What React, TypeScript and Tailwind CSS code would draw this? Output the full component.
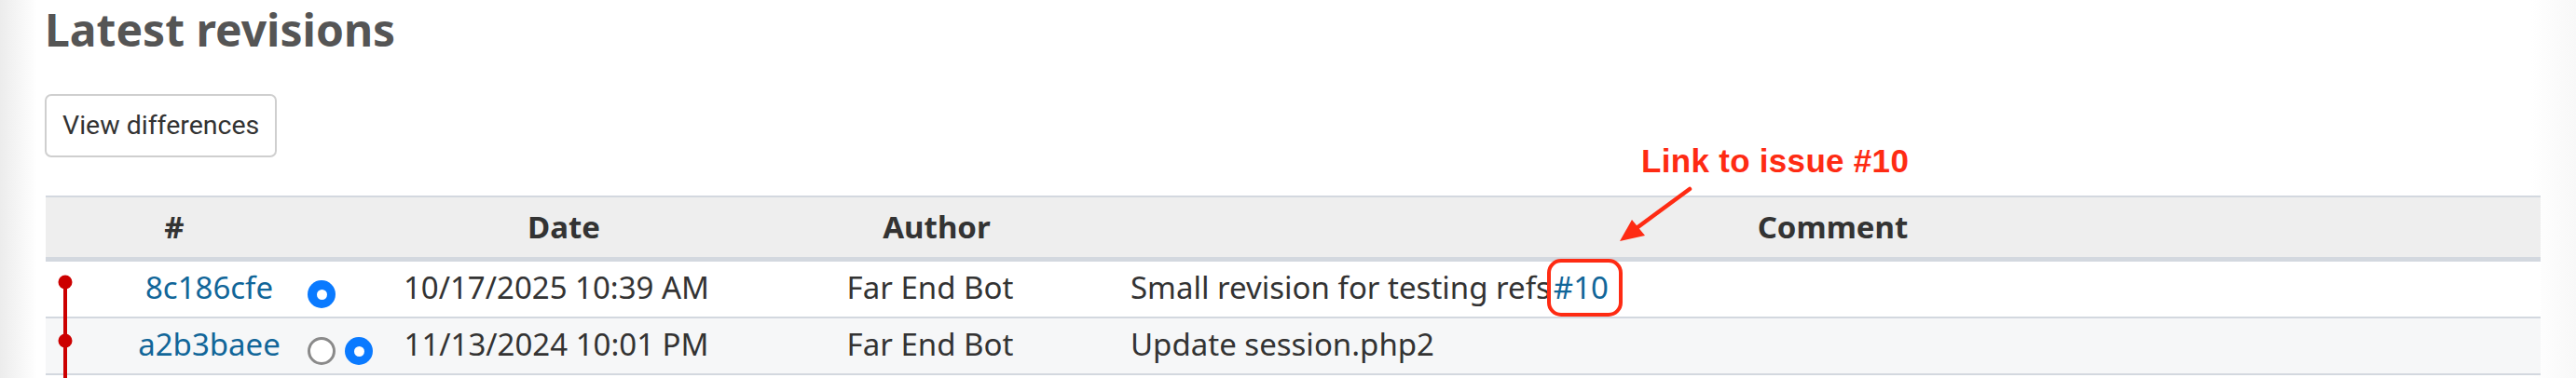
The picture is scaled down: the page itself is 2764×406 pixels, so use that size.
import type { ReactNode } from 'react'

type Revision = {
  id: string
  date: string
  author: string
  comment: ReactNode
  fromChecked: boolean
  showFrom: boolean
  showTo: boolean
}

const revisions: Revision[] = [
  {
    id: '8c186cfe',
    date: '10/17/2025 10:39 AM',
    author: 'Far End Bot',
    comment: (
      <>
        Small revision for testing refs<a className="ml-[3px] text-[#116699]">#10</a>
      </>
    ),
    fromChecked: true,
    showFrom: true,
    showTo: false,
  },
  {
    id: 'a2b3baee',
    date: '11/13/2024 10:01 PM',
    author: 'Far End Bot',
    comment: 'Update session.php2',
    fromChecked: false,
    showFrom: true,
    showTo: true,
  },
]

const cols = 'grid grid-cols-[276px_40px_40px_384px_418px_1fr]'

/** Mac-style radio: blue disc with white dot when checked, grey ring otherwise. */
function Radio({ checked }: { checked: boolean }) {
  if (checked) {
    return (
      <span className="flex h-[30px] w-[30px] items-center justify-center rounded-full bg-[#0a7aff]">
        <span className="h-[11px] w-[11px] rounded-full bg-white" />
      </span>
    )
  }
  return <span className="h-[30px] w-[30px] rounded-full border-[3px] border-[#8a8a8a] bg-white" />
}

export default function App() {
  return (
    <div className="relative min-h-[406px] w-full overflow-hidden bg-[linear-gradient(to_right,#ececec,#ffffff_40px,#ffffff_calc(100%-48px),#f8f8f8)] font-['Noto_Sans',sans-serif] text-[#333]">
      <div className="pr-[38px] pl-[48px] pt-[8px]">
        <h2 className="text-[48px] leading-[48px] font-bold text-[#555]">Latest revisions</h2>

        <button className="mt-[45px] flex h-[68px] w-[249px] items-center rounded-[7px] border-2 border-[#cfcfcf] bg-white pl-[17px] font-['Roboto',sans-serif] text-[28.5px] text-[#333]">
          View differences
        </button>

        <div className="mt-[41px] ml-px">
          <div
            className={`${cols} h-[71px] border-t-2 border-b-[5px] border-[#d3d8df] bg-[#eeeeee] text-[33px] font-bold`}
          >
            <div className="flex items-center justify-center">#</div>
            <div />
            <div />
            <div className="flex items-center justify-center pl-[16px]">Date</div>
            <div className="flex items-center justify-center pl-[14px]">Author</div>
            <div className="flex items-center justify-center">Comment</div>
          </div>

          {revisions.map((r, i) => (
            <div
              key={r.id}
              className={`${cols} h-[61px] border-b-2 border-[#d3d8df] text-[33px] ${
                i % 2 === 1 ? 'bg-[#f6f7f8]' : 'bg-white'
              }`}
            >
              <div className="flex items-center justify-center pb-[4px] pl-[75px]">
                <a className="text-[#116699]">{r.id}</a>
              </div>
              <div className="flex items-center justify-center pt-[11px]">
                {r.showFrom && <Radio checked={r.fromChecked} />}
              </div>
              <div className="flex items-center justify-center pt-[11px]">
                {r.showTo && <Radio checked={!r.fromChecked} />}
              </div>
              <div className="flex items-center justify-center pb-[4px]">{r.date}</div>
              <div className="flex items-center justify-center pb-[4px]">{r.author}</div>
              <div className="flex items-center pb-[4px] pl-[6px] whitespace-pre">{r.comment}</div>
            </div>
          ))}
        </div>
      </div>

      {/* revision graph + screenshot annotation */}
      <svg className="pointer-events-none absolute top-0 left-0" width="2764" height="406">
        <line x1="70" y1="303" x2="70" y2="420" stroke="#cc0000" strokeWidth="4" />
        <circle cx="70" cy="303" r="7.5" fill="#cc0000" />
        <circle cx="70" cy="366" r="7.5" fill="#cc0000" />

        <line x1="1813" y1="203" x2="1756" y2="245" stroke="#fe2b13" strokeWidth="4.5" strokeLinecap="round" />
        <polygon points="1738,259 1751,236 1765,253" fill="#fe2b13" />
        <rect x="1662" y="280" width="77" height="58" rx="13" fill="none" stroke="#fe2b13" strokeWidth="4" />
      </svg>

      <div className="absolute top-[155px] left-[1761px] font-['Liberation_Sans',sans-serif] text-[35px] leading-[35px] font-bold tracking-[0.3px] text-[#fe2b13]">
        Link to issue #10
      </div>
    </div>
  )
}
